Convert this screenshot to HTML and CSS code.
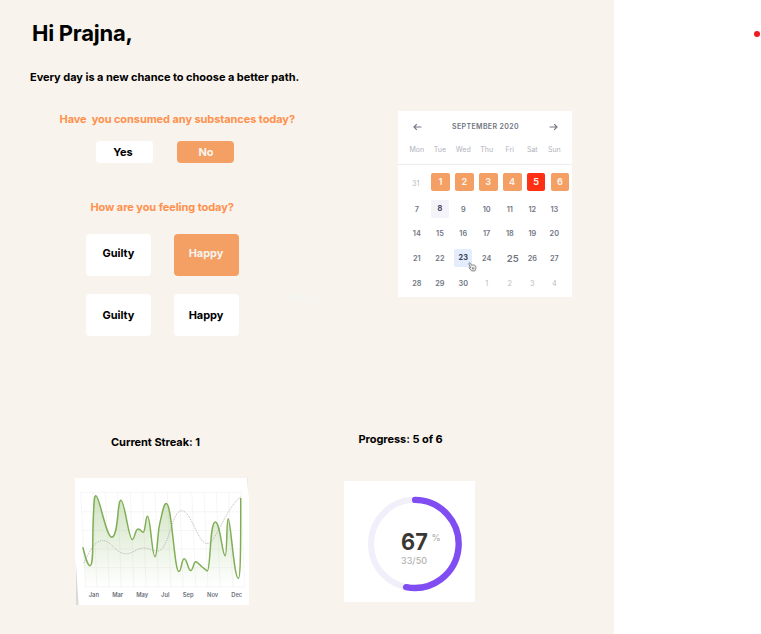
FILE: index.html
```html
<!DOCTYPE html>
<html lang="en">
<head>
<meta charset="utf-8">
<title>Daily check-in</title>
<link rel="stylesheet" href="styles.css">
</head>
<body>
<div class="app">
  <main class="dashboard">
    <h1>Hi Prajna,</h1>
    <p class="tagline">Every day is a new chance to choose a better path.</p>
    <div class="top">
      <section class="checkin">
        <h2 class="question q-use">Have&nbsp; you consumed any substances today?</h2>
        <div class="answers">
          <button class="btn yes">Yes</button>
          <button class="btn selected">No</button>
        </div>
        <h2 class="question q-mood">How are you feeling today?</h2>
        <div class="moods">
          <button class="btn">Guilty</button>
          <button class="btn selected">Happy</button>
          <button class="btn">Guilty</button>
          <button class="btn">Happy</button>
        </div>
      </section>
      <span class="next">Next</span>
      <section class="calendar">
        <header class="cal-head">
          <svg class="arrow" viewBox="0 0 9 8"><path d="M8.4 4H1M3.8 1.2L1 4l2.8 2.8"/></svg>
          <span>SEPTEMBER 2020</span>
          <svg class="arrow" viewBox="0 0 9 8"><path d="M.6 4H8M5.2 1.2L8 4 5.2 6.8"/></svg>
        </header>
        <div class="week days"><span>Mon</span><span>Tue</span><span>Wed</span><span>Thu</span><span>Fri</span><span>Sat</span><span>Sun</span></div>
        <div class="logged"><span class="muted">31</span><b>1</b><b>2</b><b>3</b><b>4</b><b class="red">5</b><b>6</b></div>
        <div class="week"><span>7</span><span><i class="eight">8</i></span><span>9</span><span>10</span><span>11</span><span>12</span><span>13</span></div>
        <div class="week"><span>14</span><span>15</span><span>16</span><span>17</span><span>18</span><span>19</span><span>20</span></div>
        <div class="week"><span>21</span><span>22</span><span><i class="today">23<svg class="cursor" viewBox="0 0 10 11"><path d="M1.2 1.2C1.9.4 2.6.9 3 1.7l1 1.9c1.4-.6 3-.5 4 .3.9.9 1 2.6.4 4.1L7.7 9.8H3.9L1.4 6.7c-.5-.8.3-1.3 1.1-.8L3 6.3 1.1 2.5C.9 2 .9 1.6 1.2 1.2zM5 6v2M6.4 6v2"/></svg></i></span><span>24</span><span class="big">25</span><span>26</span><span>27</span></div>
        <div class="week"><span>28</span><span>29</span><span>30</span><span class="muted">1</span><span class="muted">2</span><span class="muted">3</span><span class="muted">4</span></div>
      </section>
    </div>
    <div class="bottom">
      <section class="streak">
        <h3>Current Streak: 1</h3>
        <div class="chart">
          <svg viewBox="30 156 522 384">
            <defs><linearGradient id="fill" x1="0" y1="0" x2="0" y2="1"><stop offset="0" stop-color="#7aae50" stop-opacity=".34"/><stop offset="1" stop-color="#7aae50" stop-opacity="0"/></linearGradient></defs>
            <path class="edge" d="M30 405L39 540H30zM549 156h3v60z"/>
            <path class="grid" d="M45 199H535M48 258H536M51 315H537M54 371H539M57 427H541M60 485H543M45 199L60 485M82 199L94 485M120 199L131 485M157 199L168 485M195 199L206 485M232 199L243 485M270 199L280 485M307 199L318 485M344 199L355 485M381 199L393 485M418 199L430 485M455 199L467 485M492 199L505 485M530 199L541 485"/>
            <path fill="url(#fill)" d="M52 367C60 398 66 421 73 421C86 421 79 344 84 262C86 222 86 210 91 210C102 210 122 335 139 335C160 335 155 223 167 223C178 223 190 342 201 342C209 342 209 310 219 310C226 310 229 320 234 320C241 320 241 272 247 272C257 272 260 394 270 394C277 394 277 320 285 290C292 262 296 233 304 233C321 233 328 439 342 439C350 439 350 400 358 400C367 400 370 436 378 436C385 436 386 409 393 409C400 409 408 424 416 428C421 430 424 437 428 437C438 437 435 289 452 289C467 289 473 391 482 391C488 391 486 279 491 279C499 279 508 460 522 460C530 460 529 300 529 218V485H60z"/>
            <path class="trend" d="M55 413C74 370 91 345 112 345C137 345 151 385 182 385C204 385 215 367 238 368C255 369 264 377 278 377C312 377 319 255 350 255C380 255 399 354 427 354C455 354 477 257 530 211"/>
            <path class="line" d="M52 367C60 398 66 421 73 421C86 421 79 344 84 262C86 222 86 210 91 210C102 210 122 335 139 335C160 335 155 223 167 223C178 223 190 342 201 342C209 342 209 310 219 310C226 310 229 320 234 320C241 320 241 272 247 272C257 272 260 394 270 394C277 394 277 320 285 290C292 262 296 233 304 233C321 233 328 439 342 439C350 439 350 400 358 400C367 400 370 436 378 436C385 436 386 409 393 409C400 409 408 424 416 428C421 430 424 437 428 437C438 437 435 289 452 289C467 289 473 391 482 391C488 391 486 279 491 279C499 279 508 460 522 460C530 460 529 300 529 218"/>
            <g class="months"><text x="85" y="515">Jan</text><text x="157" y="515">Mar</text><text x="231" y="515">May</text><text x="301" y="515">Jul</text><text x="370" y="515">Sep</text><text x="444" y="515">Nov</text><text x="517" y="515">Dec</text></g>
          </svg>
        </div>
      </section>
      <section class="progress">
        <h3>Progress: 5 of 6</h3>
        <div class="ring">
          <svg viewBox="27 168 391 362">
            <circle class="track" cx="240" cy="356.500" r="132"/>
            <path class="arc" d="M240 224.500A132 132 0 1 1 213 486"/>
            <text class="pct" x="198" y="376" textLength="80" lengthAdjust="spacingAndGlyphs">67</text>
            <text class="sign" x="289" y="347">%</text>
            <text class="count" x="198" y="416">33/50</text>
          </svg>
        </div>
      </section>
    </div>
  </main>
  <aside class="side"><span class="dot"></span></aside>
</div>
</body>
</html>
```
FILE: styles.css
```css
* { box-sizing: border-box; }
body { margin: 0; font-family: Inter, sans-serif; color: #000; background: #fff; }
h1, h2, h3, p { margin: 0; }
svg { display: block; }
.app { display: flex; width: 761px; height: 634px; overflow: hidden; }
.dashboard { width: 613.5px; height: 634px; background: #f8f3ed; }
h1 { height: 48px; padding: 19px 0 0 32px; font-size: 22px; line-height: 28px; font-weight: 650; letter-spacing: -.25px; }
.tagline { padding: 21px 0 0 30px; font-size: 11px; line-height: 16px; font-weight: 700; letter-spacing: -.04px; }
.top { display: flex; height: 349px; padding-top: 26px; }
.checkin { width: 287px; }
.question { color: #ff914d; font-size: 11px; line-height: 16px; font-weight: 650; letter-spacing: -.075px; white-space: nowrap; }
.q-use { padding-left: 59.500px; }
.q-mood { padding-left: 90.400px; margin-top: 36px; }
.answers { display: flex; gap: 24px; padding: 14px 0 0 96.400px; }
.btn { border: 0; padding: 0; border-radius: 4px; background: #fff; color: #000; font: 700 11px/16px Inter, sans-serif; letter-spacing: -.05px; }
.selected { background: #f49f64; color: #f8f3ed; }
.answers .btn { width: 57px; height: 22px; }
.answers .yes { padding-right: 4px; }
.moods { display: grid; grid-template-columns: 65px 65px; grid-auto-rows: 42px; gap: 18px 23px; padding: 18.500px 0 0 86px; }
.moods .btn { padding-bottom: 3px; }
.moods .btn:nth-child(n+3) { padding-bottom: 0; }
.moods .btn:nth-child(even) { padding-right: 1px; }
.next { width: 111px; padding: 179px 0 0 1px; font-size: 12px; font-weight: 700; color: #f4f3f1; }
.calendar { width: 174px; height: 186px; background: #fff; color: #6f7582; font-size: 7.300px; font-weight: 600; }
.cal-head { display: flex; justify-content: space-between; align-items: center; height: 31px; padding: 0 14px 0 15px; font-size: 7px; letter-spacing: .36px; }
.arrow { width: 9px; height: 8px; fill: none; stroke: #737884; stroke-width: 1.2; }
.week { display: grid; grid-template-columns: 23px 23.2px 23.5px 23.3px 23px 22px 22px; height: 24.600px; padding-left: 7.300px; align-items: center; text-align: center; }
.days { height: 23px; padding-bottom: 7px; border-bottom: 1px solid #ededf0; color: #b0b3bb; font-size: 7px; font-weight: 400; }
.logged { display: flex; gap: 5.100px; align-items: center; height: 32px; padding: 1px 0 0 7.500px; }
.logged .muted { width: 20.500px; padding: 4px 0 0; text-align: center; }
.logged b { width: 18.800px; height: 18px; flex: none; border-radius: 2px; background: #f49f64; color: #fdf1e6; font-size: 9px; line-height: 18px; text-align: center; font-weight: 700; }
.logged .red { background: #ff3014; }
.muted { color: #bbbdc3; font-weight: 400; }
.week i { position: relative; display: block; margin: 0 auto; width: 18px; height: 18px; border-radius: 2px; line-height: 18px; font-style: normal; font-weight: 700; color: #3e4454; }
.eight { background: #f3f3f9; }
.today { background: #e4edfd; }
.big { font-size: 9.500px; padding-left: 6px; }
.cursor { position: absolute; left: 14px; top: 13px; width: 9px; height: 10px; fill: #eee; stroke: #777; stroke-width: 1; }
.bottom { display: flex; }
h3 { font-size: 11px; line-height: 16px; font-weight: 700; letter-spacing: -.05px; }
.streak { width: 344px; padding-left: 75px; }
.streak h3 { padding-left: 36px; }
.chart { width: 174px; height: 127px; margin-top: 28px; background: #fff; }
.chart svg { width: 174px; height: 127px; }
.edge { fill: #dcdad5; }
.grid { fill: none; stroke: #f1f1f1; stroke-width: 2; }
.line { fill: none; stroke: #7fae54; stroke-width: 4.500; stroke-linecap: round; stroke-linejoin: round; }
.trend { fill: none; stroke: #a9a9a9; stroke-width: 2.500; stroke-dasharray: 3 3; }
.months { font-size: 17.500px; font-weight: 600; fill: #6d717b; text-anchor: middle; }
.progress h3 { padding-left: 14.500px; margin-top: -3px; }
.ring { width: 130.500px; height: 121px; margin-top: 34px; background: #fff; }
.track { fill: none; stroke: #f1eff9; stroke-width: 18; }
.arc { fill: none; stroke: #7f4df2; stroke-width: 19; stroke-linecap: round; }
.pct { font-size: 68px; font-weight: 700; fill: #3b3834; }
.sign { font-size: 28px; font-weight: 500; fill: #b3b1ae; }
.count { font-size: 27px; font-weight: 500; fill: #b3b1ae; }
.side { flex: 1; display: flex; justify-content: flex-end; padding: 31px 1px 0 0; }
.dot { width: 6px; height: 6px; border-radius: 50%; background: #ee1c1c; }
```
